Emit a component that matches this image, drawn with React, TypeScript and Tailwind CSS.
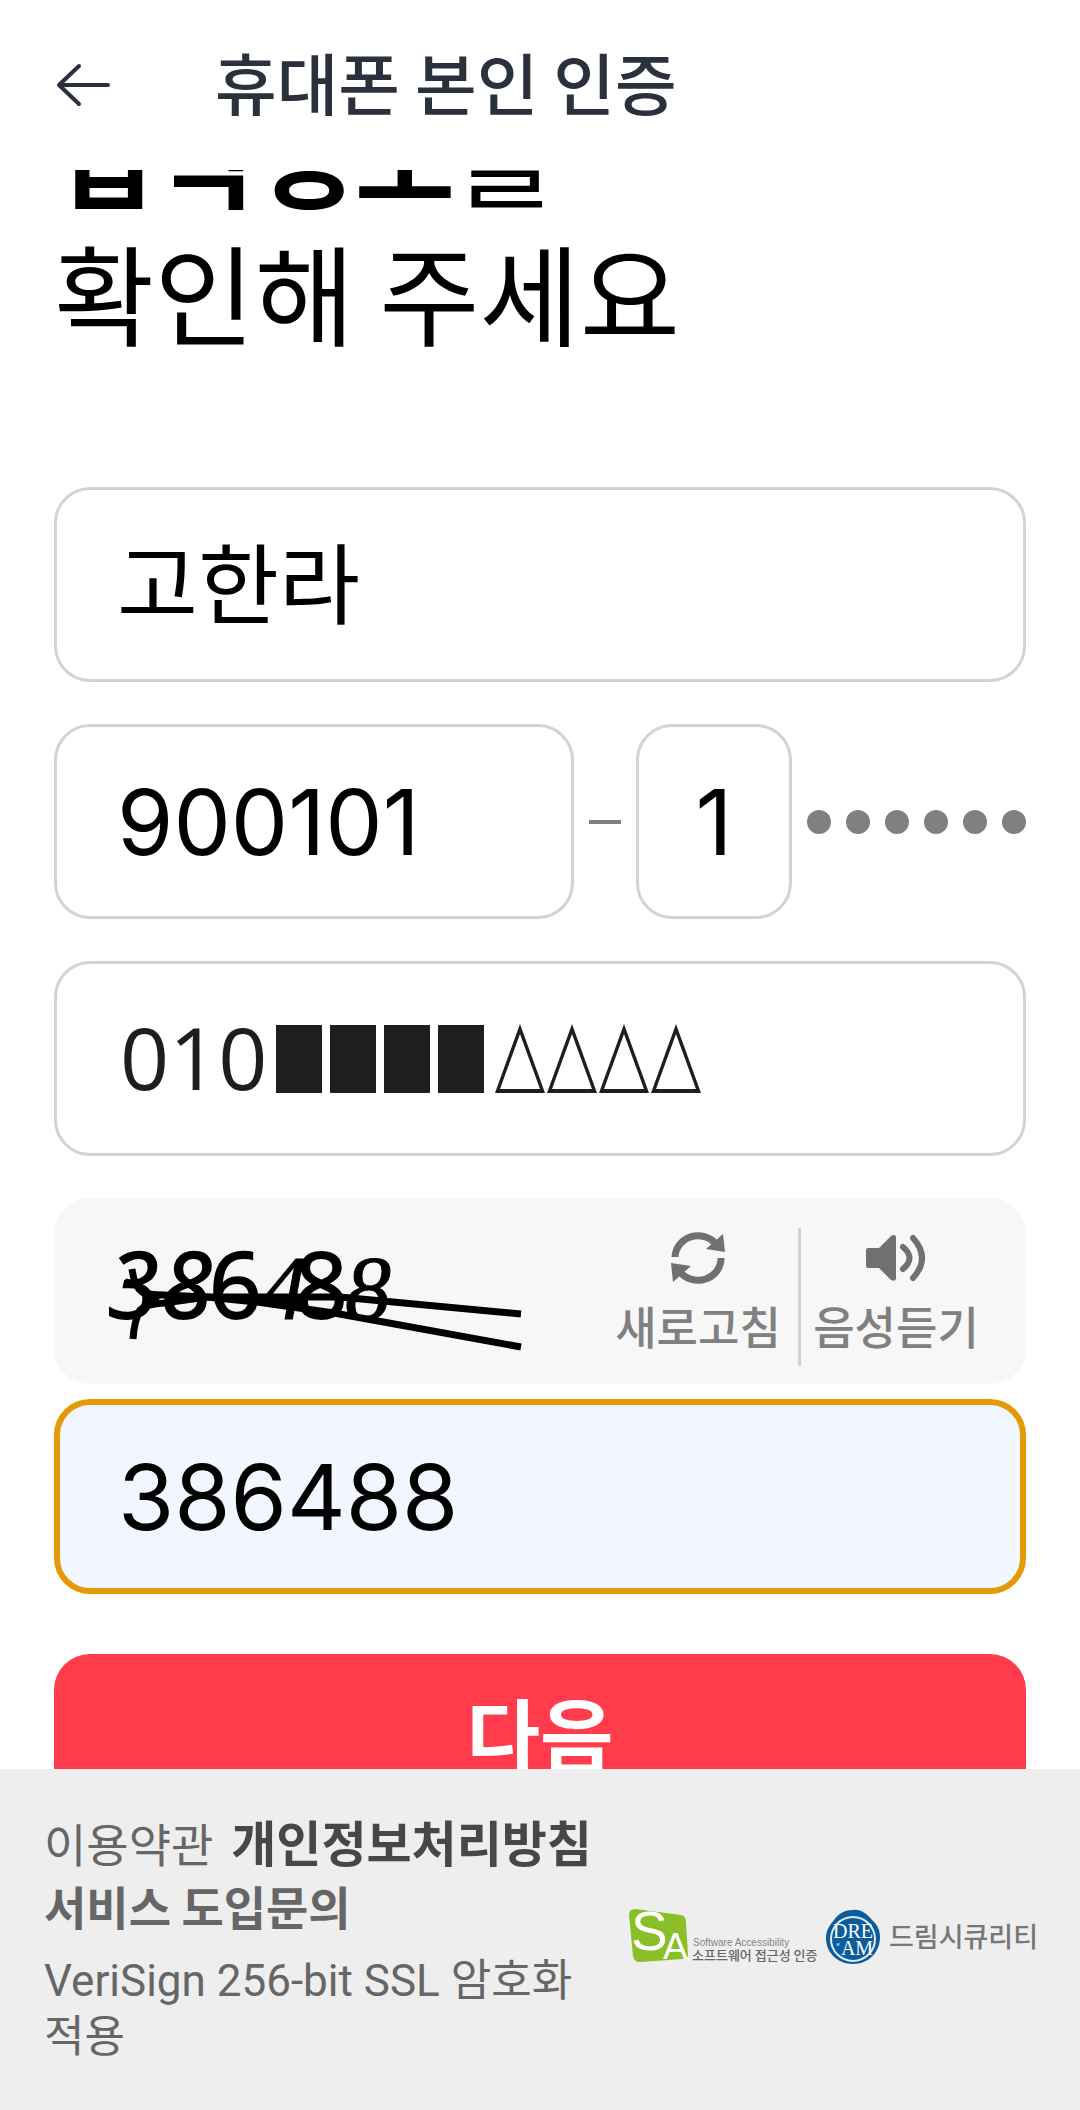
import { useState } from "react";

const FIELD =
  "h-[195px] min-w-0 rounded-[36px] border-[3px] border-[#d3d3d3] bg-white outline-none";
const INTER = "font-['Inter','Noto_Sans_CJK_KR',sans-serif]";

function ArrowLeft() {
  return (
    <svg width="56" height="44" viewBox="0 0 56 44" fill="none" stroke="#2a303c" strokeWidth="4" strokeLinecap="round" strokeLinejoin="round" aria-hidden="true">
      <path d="M23 3 L3 22 L23 41 M3 22 H52" />
    </svg>
  );
}

function RefreshIcon() {
  return (
    <svg width="56" height="56" viewBox="0 0 56 56" aria-hidden="true">
      <g fill="none" stroke="#707070" strokeWidth="7">
        <path d="M5 27 A23 22 0 0 1 46 14" />
        <path d="M51 28 A23 22 0 0 1 10 42" />
      </g>
      <path d="M53 4 L55 22 L36 19 Z M1 33 L21 36 L3 52 Z" fill="#707070" />
    </svg>
  );
}

function SpeakerIcon() {
  return (
    <svg width="62" height="56" viewBox="0 0 62 56" aria-hidden="true">
      <path d="M3 18 H14 L26 6 Q31 3 31 8 V48 Q31 52 26 50 L14 38 H3 Q1 38 1 35 V21 Q1 18 3 18 Z" fill="#707070" />
      <g fill="none" stroke="#707070" strokeWidth="6" strokeLinecap="round">
        <path d="M38 17 Q51 28 38 39" />
        <path d="M48 8 Q66 28 48 48" />
      </g>
    </svg>
  );
}

function Captcha() {
  return (
    <svg width="480" height="186" viewBox="0 0 480 186" role="img" aria-label="보안문자 이미지">
      <g fill="#000" stroke="#000" strokeWidth="2" fontSize="92" fontFamily="'Open Sans', sans-serif">
        <text x="54" y="120" fontStyle="italic">3</text>
        <text x="107" y="120" fontStyle="italic">8</text>
        <text x="155" y="120">6</text>
        <text x="207" y="121" fontStyle="italic" fontFamily="'Liberation Serif', serif" strokeWidth="1">4</text>
        <text x="241" y="120">8</text>
        <text x="291" y="121" fontStyle="italic" fontFamily="'Liberation Serif', serif" strokeWidth="1">8</text>
      </g>
      <g fill="none" stroke="#000" strokeWidth="7">
        <path d="M79 141 Q80 124 86 112 Q92 106 110 105 L153 99 L203 104 L280 115 L467 149" />
        <path d="M78 71 Q80 88 88 94 Q94 97 110 97 L153 99 L286 99 L467 116" />
        <path d="M71 84 L82 86 L104 103" />
      </g>
    </svg>
  );
}

function MaskShapes() {
  return (
    <svg width="430" height="70" viewBox="0 0 430 70" aria-hidden="true">
      <g fill="#1e1e1e">
        {[0, 54, 108, 162].map((x) => (
          <rect key={x} x={x + 1} y="1" width="46" height="68" />
        ))}
        {[220, 272, 324, 376].map((x) => (
          <path key={x} fillRule="evenodd" d={`M${x} 69 L${x + 25} 0 L${x + 50} 69 Z M${x + 5} 65 H${x + 45} L${x + 25} 10 Z`} />
        ))}
      </g>
    </svg>
  );
}

function SaLogo() {
  return (
    <svg width="188" height="58" viewBox="0 0 188 58" role="img" aria-label="Software Accessibility 소프트웨어 접근성 인증">
      <path d="M0 7 Q0 1 6 1 L52 7 Q57 8 57 14 L59 47 Q59 51 54 51 L11 54 Q5 54 4 48 Z" fill="#8abf27" />
      <g fill="#fff" fontFamily="'Liberation Sans', sans-serif">
        <text x="2" y="42" fontSize="55">S</text>
        <text x="34" y="51" fontSize="37">A</text>
      </g>
      <text x="64" y="38" fontSize="10" fill="#858585" fontFamily="'Liberation Sans', sans-serif">Software Accessibility</text>
      <text x="63" y="52" fontSize="13" fontWeight="500" fill="#666" fontFamily="'Noto Sans CJK KR', sans-serif">소프트웨어 접근성 인증</text>
    </svg>
  );
}

function DreamLogo() {
  return (
    <svg width="56" height="56" viewBox="0 0 56 56" role="img" aria-label="DREAM">
      <path d="M28 1 C36 0 42 5 47 11 C53 16 55 22 55 28 C55 44 43 55 28 55 C13 55 1 44 1 29 C1 22 4 17 9 11 C14 4 20 1 28 1 Z" fill="#0a5c9e" />
      <circle cx="28" cy="30" r="22" fill="none" stroke="#dfe9f2" strokeWidth="2" />
      <g fill="#fff" fontFamily="'Liberation Serif', serif" textAnchor="middle">
        <text x="28" y="29" fontSize="20">DRE</text>
        <text x="32" y="46" fontSize="20">AM</text>
        <text x="13" y="37" fontSize="7">e</text>
      </g>
    </svg>
  );
}

export default function App() {
  const [name, setName] = useState("고한라");
  const [birth, setBirth] = useState("900101");
  const [gender, setGender] = useState("1");
  const [phone, setPhone] = useState("010");
  const [code, setCode] = useState("386488");

  return (
    <div className="flex h-screen flex-col overflow-hidden bg-white font-['Noto_Sans_CJK_KR',sans-serif]">
      <header className="flex h-[170px] shrink-0 items-center gap-[103px] bg-white px-14">
        <button type="button" aria-label="뒤로 가기">
          <ArrowLeft />
        </button>
        <h1 className="pb-2 text-[67px] leading-[96px] font-medium text-[#2a303c]">휴대폰 본인 인증</h1>
      </header>

      <main className="min-h-0 flex-1 overflow-hidden px-[54px]">
        <h2 className="-mt-[86px] text-[109px] leading-[138px] text-black">
          <strong className="font-bold">입력정보</strong>를
          <br />
          확인해 주세요
        </h2>

        <form className="mt-[127px] flex flex-col" onSubmit={(e) => e.preventDefault()}>
          <div className="flex flex-col gap-[42px]">
            <input aria-label="이름" value={name} onChange={(e) => setName(e.target.value)} className={`${FIELD} w-full px-[60px] pb-3 text-[88px] text-black`} />

            <div className="flex items-center gap-[15px]">
              <input aria-label="생년월일" value={birth} onChange={(e) => setBirth(e.target.value)} className={`${FIELD} ${INTER} flex-1 px-[60px] text-[91px] text-black`} />
              <span className="h-1 w-8 shrink-0 bg-[#808080]" />
              <input aria-label="주민등록번호 뒤 첫 자리" value={gender} onChange={(e) => setGender(e.target.value)} className={`${FIELD} ${INTER} w-[156px] text-center text-[91px] text-black`} />
              <div className="flex shrink-0 gap-[15px]">
                {[0, 1, 2, 3, 4, 5].map((i) => (
                  <span key={i} className="size-6 rounded-full bg-[#808080]" />
                ))}
              </div>
            </div>

            <div className="relative">
              <input aria-label="휴대폰 번호" value={phone} onChange={(e) => setPhone(e.target.value)} className={`${FIELD} w-full px-[63px] pb-1 font-['Open_Sans',sans-serif] text-[86px] text-[#1e1e1e]`} />
              <div className="pointer-events-none absolute inset-y-0 left-[221px] flex items-center">
                <MaskShapes />
              </div>
            </div>

            <div className="flex h-[186px] items-center justify-between rounded-[36px] bg-[#f7f7f7] pr-[35px]">
              <Captcha />
              <div className="mt-3 flex h-[138px] text-[45px] leading-[60px] font-medium text-[#808080]">
                <button type="button" className="flex w-[200px] flex-col items-center gap-2.5 pt-0.5">
                  <RefreshIcon />
                  새로고침
                </button>
                <span className="w-[3px] bg-[#d3d3d3]" />
                <button type="button" className="flex w-[190px] flex-col items-center gap-2.5 pt-0.5">
                  <SpeakerIcon />
                  음성듣기
                </button>
              </div>
            </div>
          </div>

          <input aria-label="보안문자 입력" value={code} onChange={(e) => setCode(e.target.value)} className={`${INTER} mt-[15px] h-[195px] w-full rounded-[36px] border-[6px] border-[#e49a06] bg-[#f2f7ff] px-[58px] text-[91px] text-black outline-none`} />

          <button type="submit" className="mt-[60px] h-[190px] shrink-0 rounded-[36px] bg-[#ff3b4c] pb-9 text-[80px] leading-[120px] font-bold text-white">
            다음
          </button>
        </form>
      </main>

      <footer className="flex h-[341px] shrink-0 items-center justify-between bg-[#eeeeee] pr-[42px] pb-1.5 pl-11 text-[#666]">
        <div>
          <div className="text-[46px] leading-[63px]">
            <a href="#terms">이용약관</a>
            <a href="#privacy" className="ml-[18px] text-[49px] font-bold text-[#474747]">개인정보처리방침</a>
            <br />
            <a href="#contact" className="font-bold">서비스 도입문의</a>
          </div>
          <p className="mt-4 font-['Roboto','Noto_Sans_CJK_KR',sans-serif] text-[44px] leading-[56px]">
            VeriSign 256-bit SSL 암호화
            <br />
            적용
          </p>
        </div>
        <div className="flex shrink-0 items-center gap-2">
          <SaLogo />
          <div className="flex items-center gap-2">
            <DreamLogo />
            <span className="text-[27px] font-medium text-[#777]">드림시큐리티</span>
          </div>
        </div>
      </footer>
    </div>
  );
}
